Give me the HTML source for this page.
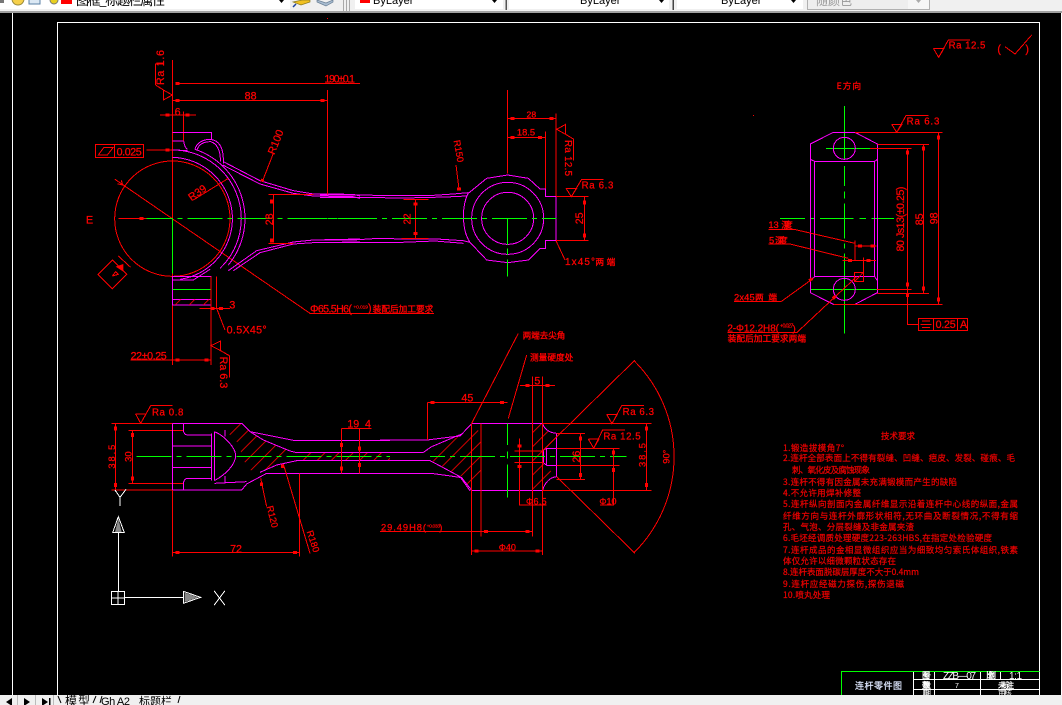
<!DOCTYPE html>
<html lang="zh">
<head>
<meta charset="utf-8">
<title>连杆零件图</title>
<style>
html,body{margin:0;padding:0;background:#000;width:1062px;height:705px;overflow:hidden}
svg{display:block;position:absolute;left:0;top:0}
text{font-family:"Liberation Sans","Noto Sans CJK SC",sans-serif;fill:#f00;stroke:none}
.r,.m,.g,.w,.t{fill:none;stroke-width:3;shape-rendering:crispEdges}
.r{stroke:#f00}.m{stroke:#f0f}.g{stroke:#0f0}.w{stroke:#fff}
.t{stroke:#f00;stroke-width:9}
.f{font-size:32px;stroke:#f00;stroke-width:.8px}
.c{font-size:26px;font-family:"Noto Sans CJK SC",sans-serif;stroke:#f00;stroke-width:1px}
.a{text-anchor:middle}
.k{font-size:8.5px;font-family:"Noto Sans CJK SC",sans-serif;fill:#e80000;stroke:#e80000;stroke-width:.25px}
.tb{font-size:11px;fill:#000}
.u1{stroke-width:1;stroke:#fff;fill:none;shape-rendering:crispEdges}
</style>
</head>
<body>
<svg width="1062" height="705" viewBox="0 0 1062 705" xmlns="http://www.w3.org/2000/svg">
<defs>
<pattern id="h" width="30" height="30" patternUnits="userSpaceOnUse" patternTransform="rotate(-45)"><path d="M0 1H30" stroke="#f00" stroke-width="3"/></pattern>
</defs>
<rect width="1062" height="705" fill="#000"/>

<!-- toolbar -->
<rect width="1062" height="13" fill="#f0f0f0"/>
<rect y="11" width="1062" height="2" fill="#a0a0a0"/>
<rect width="290" height="9" fill="#fff"/>
<path d="M0 0h4v3h-4z" fill="#777"/>
<circle cx="18" cy="-1" r="6" fill="#f6d04a" stroke="#9a8a3a"/>
<rect x="29" y="-4" width="11" height="8" fill="#dbe8f4" stroke="#5a7fa5"/>
<circle cx="54" cy="0" r="4" fill="#e8d020" stroke="#777"/>
<rect x="61" y="0" width="11" height="4" fill="#f00"/>
<text x="76" y="5" style="font-size:13px;fill:#000;font-family:'Noto Sans CJK SC',sans-serif" textLength="89">图框_标题栏属性</text>
<path d="M279 0h5l-2.500 3z" fill="#000"/>
<path d="M293 2l9-2h8v2l-9 3z" fill="#f0c020" stroke="#8a7a20" stroke-width=".7"/>
<path d="M293 7l3-3" stroke="#1a3fa0" stroke-width="1.500"/>
<path d="M317 0l9 3 7-3v2l-7 4-9-4z" fill="#a8bcd0" stroke="#6a7f95" stroke-width=".7"/>
<path d="M343.500 0v11M346.500 0v11M349.500 0v11" stroke="#aaa"/>
<rect x="355" width="148" height="9" fill="#fff"/>
<rect x="360" y="0" width="10" height="3" fill="#f00"/>
<text x="373" y="4" class="tb">ByLayer</text>
<path d="M492 0h5l-2.500 3z" fill="#000"/>
<rect x="509" width="160" height="9" fill="#fff"/>
<rect x="505.500" width="1.500" height="10" fill="#555"/>
<text x="580" y="4" class="tb">ByLayer</text>
<path d="M659 0h5l-2.500 3z" fill="#000"/>
<rect x="677" width="126" height="9" fill="#fff"/>
<rect x="672.500" width="1.500" height="10" fill="#444"/>
<text x="721" y="4" class="tb">ByLayer</text>
<path d="M791 0h5l-2.500 3z" fill="#000"/>
<rect x="808" width="100" height="9" fill="#eee"/>
<rect x="908" width="21" height="9" fill="#f6f6f6"/>
<path d="M807.500 0v9.500h122V0" fill="none" stroke="#b0b0b0"/>
<text x="816" y="5" style="font-size:12px;fill:#999;font-family:'Noto Sans CJK SC',sans-serif" textLength="36">随颜色</text>
<path d="M916 0h5l-2.500 3z" fill="#aaa"/>

<!-- frames -->
<path class="u1" d="M12.500 13V695M57.500 695V22.500H1039.500V695M1061.500 13V695"/>

<!-- title block -->
<path class="u1" d="M913.500 671V695M934.500 671V695M980.500 671V695M1000.500 671V679M914 679.500H1039M914 689.500H1039"/>
<path d="M841.500 695V671.500H1039.500" fill="none" stroke="#0f0" stroke-width="1" shape-rendering="crispEdges"/>
<text x="855" y="689" style="font-size:9px;fill:#dfe8ff;stroke:#dfe8ff;stroke-width:.2px;font-family:'Noto Sans CJK SC',sans-serif" textLength="47">连杆零件图</text>
<g>
<text x="922" y="678" style="font-size:8px;fill:#fff;stroke:#fff;stroke-width:.3px;font-family:'Noto Sans CJK SC',sans-serif" textLength="9">图号</text>
<text x="943" y="679" style="font-size:10px;fill:#fff" textLength="33">ZZB—07</text>
<text x="986" y="678" style="font-size:8px;fill:#fff;stroke:#fff;stroke-width:.3px;font-family:'Noto Sans CJK SC',sans-serif" textLength="10">比例</text>
<text x="1009" y="679" style="font-size:10px;fill:#fff" textLength="13">1:1</text>
<text x="922" y="688" style="font-size:8px;fill:#fff;stroke:#fff;stroke-width:.3px;font-family:'Noto Sans CJK SC',sans-serif" textLength="9">数量</text>
<text x="955" y="688" style="font-size:7px;fill:#fff">7</text>
<text x="998" y="688" style="font-size:8px;fill:#fff;stroke:#fff;stroke-width:.3px;font-family:'Noto Sans CJK SC',sans-serif" textLength="16">未标注</text>
<text x="922" y="696" style="font-size:8px;fill:#fff;font-family:'Noto Sans CJK SC',sans-serif" textLength="9">日期</text>
<text x="998" y="696" style="font-size:8px;fill:#fff;font-family:'Noto Sans CJK SC',sans-serif" textLength="14">审核</text>
</g>

<!-- top-left view, left part -->
<g transform="translate(80 60) scale(.33333)">
<path class="r" d="M277 0V915M290 71H840M277 121H742M742 105V403M240 165H348M311 155V245"/>
<path class="t" d="M286 71h12M286 121h12M722 121h12M257 165h12M317 165h12M256 270h12M179 476h12M574 418v12M574 535v12"/>
<path class="r" d="M227 75V12H250M250 90L277 105L250 120ZM227 75L250 90"/>
<text class="f" transform="translate(252 75) rotate(-90)" textLength="105">Ra 1.6</text>
<text class="f" x="733" y="68" textLength="92">190±0.1</text>
<text class="f" x="494" y="119">88</text>
<text class="f" x="284" y="166">6</text>
<circle class="r" cx="277" cy="476" r="173"/>
<path class="r" d="M105 358L690 760H840"/>
<path class="r" d="M128 375l-16-4M128 375l-4-14"/>
<path class="m" d="M277 217H395V240M277 243H311M311 243C313 255 316 265 322 268M277 270C290 270 305 271 322 272M277 292A184 184 0 0 1 300 658M277 270A206 206 0 0 1 420 625M345 268A219 219 0 0 1 445 615"/>
<path class="m" d="M345 268C350 245 375 238 390 238C415 240 432 260 430 310M352 268C358 250 375 245 392 245C410 250 422 270 421 305"/>
<path class="m" d="M430 305L540 362L640 392L700 402L820 403L840 408M428 315L540 372L640 400L700 408L820 410L840 415"/>
<path class="m" d="M445 632L530 572L640 546L700 540L840 537M460 632L540 578L640 552L700 548L840 546"/>
<path class="m" d="M277 650H393V735H277ZM277 660H340L390 628M277 718H393"/>
<rect x="277" y="718" width="116" height="17" fill="url(#h)"/>
<path class="g" d="M277 688H393M277 476V640"/>
<path class="g" d="M200 476H840" style="stroke-dasharray:105 15 15 15;stroke-dashoffset:28"/>
<path class="r" d="M393 650V915M410 650V745M358 745H450M410 745L435 810"/>
<path class="t" d="M392 745h12M417 745h12M286 900h12M374 900h12"/>
<text class="f" x="448" y="745">3</text>
<text class="f" x="440" y="820" textLength="120">0.5X45°</text>
<path class="r" d="M152 900H393M393 857L422 843V872ZM422 872L448 887V952"/>
<text class="f" x="152" y="898" textLength="108">22±0.25</text>
<text class="f" transform="translate(420 890) rotate(90)" textLength="95">Ra 6.3</text>
<text class="f" x="18" y="490">E</text>
<path class="r" d="M115 476H200"/>
<path class="r" d="M97 600L140 643L97 686L54 643ZM115 588L152 622M97 648l18-5-8-8-10 13"/>
<path d="M107 620L130 612V635Z" fill="#f00"/>
<path class="r" d="M46 254H190V292H46ZM104 254V292M55 285L72 262H100L82 285ZM200 270H277"/>
<text class="f" x="110" y="286" textLength="75">0.025</text>
<path class="r" d="M340 420L445 355M580 280L548 362"/>
<path class="r" d="M565 403H700M565 550H640M580 403V548"/>
<text class="f a" transform="translate(358 407) rotate(-35)">R39</text>
<text class="f a" transform="translate(597 250) rotate(-68)">R100</text>
<text class="f a" transform="translate(579 478) rotate(-90)">28</text>
<path class="t" d="M548 357l-2 8"/>
<text class="f" x="690" y="757" textLength="126">Φ65.5H6(</text>
</g>

<!-- top-left view, right part -->
<g transform="translate(320 90) scale(.33333)">
<path class="r" d="M22 0V313M563 0V250M708 70V320M676 125V297M563 86H708M563 142H676"/>
<path class="t" d="M571 86h12M689 86h12M571 142h12M654 142h12M280 342h12M280 430h12M411 297h12"/>
<path class="m" d="M0 315H100L250 317L340 316L400 312L445 308M0 322H100L250 324L340 322L400 320L440 318M0 450H100L175 445L250 447L350 447L430 452M0 458H100L245 457L345 453L430 460"/>
<path class="r" d="M250 328H325M245 445H325M286 328V445"/>
<path class="m" d="M440 318L445 310L500 265L563 255L625 265L660 297H676V320H708V452H676V475H660L625 510L563 518L500 510L450 457L430 452M444 310C425 350 425 420 450 457"/>
<circle class="m" cx="563" cy="385" r="108"/>
<circle class="m" cx="563" cy="385" r="78"/>
<path class="g" d="M8 385H710" style="stroke-dasharray:105 15 15 15;stroke-dashoffset:92"/>
<path class="g" d="M563 385V465M563 475V495M563 508V560"/>
<text class="f a" x="634" y="83" style="font-size:26px">28</text>
<text class="f a" x="618" y="137" style="font-size:28px">18.5</text>
<path class="r" d="M738 295H770L754 320L738 295M754 320L785 268H850M708 320H805M708 452H805M793 320V452"/>
<path class="t" d="M793 331v12M793 431v12"/>
<text class="f" x="785" y="296" style="font-size:29px" textLength="95">Ra 6.3</text>
<text class="f a" transform="translate(789 385) rotate(-90)">25</text>
<path class="r" d="M710 118L737 103V133ZM737 133L760 147V212"/>
<text class="f" transform="translate(735 150) rotate(90)" style="font-size:29px" textLength="108">Ra 12.5</text>
<path class="r" d="M708 452L735 510"/>
<text class="f" x="735" y="525" textLength="90" style="font-size:30px">1x45°</text>
<text class="c" x="826" y="525" textLength="60">两端</text>
<text class="f a" transform="translate(272 387) rotate(-90)" style="font-size:30px">22</text>
<text class="f" transform="translate(401 152) rotate(80)" style="font-size:28px">R150</text>
<path class="r" d="M408 225L417 297"/>
<path class="r" d="M0 670H342"/>
<text x="100" y="655" style="font-size:15px;stroke:#f00;stroke-width:.6px" textLength="44">+0.019</text>
<text class="f" x="144" y="664">)</text>
<text class="c" x="158" y="666" textLength="182">装配后加工要求</text>
</g>

<!-- right view -->
<g transform="translate(720 30) scale(.33333)">
<path class="r" d="M640 55H672L656 82L640 55M656 82L685 30H750"/>
<text class="f" x="686" y="56" style="font-size:29px" textLength="110">Ra 12.5</text>
<text class="f" x="832" y="67">(</text>
<path class="r" d="M855 50L885 72L935 15"/>
<text class="f" x="916" y="67">)</text>
<text class="c" x="350" y="177" textLength="73">E方向</text>
<path class="g" d="M373 228V390M373 408V468M373 485V505M373 520V625M373 640V655M373 670V910M180 565H255M270 565H285M300 565H400M418 565H438M455 565H522M318 355H450M270 778H470"/>
<path class="m" d="M340 307H405L472 342V788L405 823H340L271 788V342ZM284 394H464V740H284ZM271 342V388L284 394M472 342V388L464 394M271 752L284 740M472 752L464 740"/>
<circle class="m" cx="373" cy="355" r="33"/>
<circle class="m" cx="373" cy="778" r="33"/>
<path class="r" d="M405 307H668M472 343H627M340 823H668M472 790H627M450 355H575M470 778H575"/>
<path class="r" d="M656 307V823M610 343V790M562 355V883H595"/>
<path class="t" d="M656 316v12M656 802v12M610 349v12M610 769v12M562 362v12M562 757v12M562 789v12"/>
<text class="f a" transform="translate(653 565) rotate(-90)">98</text>
<text class="f a" transform="translate(609 568) rotate(-90)">85</text>
<text class="f a" transform="translate(552 567) rotate(-90)" textLength="195">80 Js13(±0.25)</text>
<path class="r" d="M595 865H743V901H595ZM640 865V901M713 865V901M606 873H630M602 883H634M606 892H630"/>
<text class="f" x="647" y="894" textLength="60">0.25</text>
<text class="f" x="720" y="894">A</text>
<path class="r" d="M515 283H546L530 307L515 283M530 307L558 257H625"/>
<text class="f" x="560" y="284" style="font-size:29px" textLength="98">Ra 6.3</text>
<path class="r" d="M145 598H222L405 640M145 642H210L385 685M405 632V690M405 648H470M368 692H468M430 682V730M403 727H430V755H403ZM403 755L430 727"/>
<path class="t" d="M414 648h12M452 648h12M384 692h12M439 692h12"/>
<text class="f" x="145" y="594" style="font-size:28px">13</text>
<text class="c" x="184" y="594" textLength="34">深度</text>
<text class="f" x="147" y="640" style="font-size:28px">5</text>
<text class="c" x="165" y="640" textLength="38">深度</text>
<path class="r" d="M42 815H183L280 745M22 908H230L410 740"/>
<path class="t" d="M268 752l8-6M338 806l8-7"/>
<text class="f" x="42" y="812" textLength="62" style="font-size:28px">2x45</text>
<text class="c" x="105" y="812" textLength="66">两端</text>
<text class="f" x="22" y="905" textLength="155" style="font-size:30px">2-Φ12.2H8(</text>
<text x="180" y="893" style="font-size:16px;stroke:#f00;stroke-width:.6px" textLength="40">+0.027</text>
<text class="f" x="218" y="905" style="font-size:28px">)</text>
<text class="c" x="23" y="934" textLength="235">装配后加工要求两端</text>
</g>

<!-- bottom view left -->
<g transform="translate(90 390) scale(.33333)">
<path d="M415 100H455L480 125L530 155L600 183L615 190L590 205L560 225L510 247L480 240L460 210L445 160L410 125Z" fill="url(#h)"/>
<rect x="620" y="188" width="280" height="24" fill="url(#h)"/>
<path class="r" d="M137 72H168L152 100L137 72M152 100L182 47H248"/>
<text class="f" x="186" y="76" style="font-size:29px" textLength="94">Ra 0.8</text>
<path class="r" d="M65 100H248M115 121H280M65 300H248M115 280H280M76 100V300M127 121V280"/>
<path class="t" d="M76 109v12M76 279v12M127 129v12M127 259v12"/>
<text class="f a" transform="translate(75 200) rotate(-90)" textLength="72" style="font-size:28px">38.5</text>
<text class="f a" transform="translate(125 200) rotate(-90)" style="font-size:28px">30</text>
<path class="m" d="M248 100H455L480 125L520 150L600 183L620 188H900M248 300H455L470 282L530 250L610 250H900M248 100V300"/>
<path class="m" d="M280 100V122C282 130 285 135 295 135H365M280 300V280C282 270 285 265 295 265H365M248 168H365M248 233H365M365 130V272M373 125V272M373 125C400 135 435 170 437 195C437 225 405 255 373 272M405 120V140M405 258V280M373 280L470 275M480 125L615 152H900M510 247L560 225L620 212H900"/>
<path class="g" d="M140 200H900" style="stroke-dasharray:105 15 15 15"/>
<path class="r" d="M248 300V500M248 488H628M628 250V500"/>
<path class="t" d="M256 488h12M609 488h12M755 159v12M755 229v12M808 169v12M808 219v12M514 278v10M578 224v10"/>
<text class="f a" x="438" y="487">72</text>
<path class="r" d="M512 265L530 350M580 222L660 490M755 115V250M808 115V250M755 115H845"/>
<text class="f" x="772" y="113">19</text>
<text class="f" x="825" y="113">4</text>
<text class="f" transform="translate(530 350) rotate(76)" style="font-size:28px">R120</text>
<text class="f" transform="translate(650 425) rotate(72)" style="font-size:28px">R180</text>
<path d="M85 385L75 426H95Z" fill="#888"/>
<path d="M284 608L325 622L284 636Z" fill="#888"/>
<path class="w" d="M75 300L90 322L108 298M90 322V348M85 380L68 428H103ZM85 428V605M64 604H104V644H64ZM84 604V644M64 624H104M104 622H280M280 604L332 622L280 640ZM372 602L405 646M405 602L372 646"/>
</g>

<!-- bottom view right -->
<g transform="translate(380 330) scale(.33333)">
<path d="M275 281L303 310V455L275 481L245 440L150 390V365L245 315Z" fill="url(#h)"/>
<path d="M457 281H488L500 300L530 310L490 360V400L530 440L500 452L488 481H457Z" fill="url(#h)"/>
<path class="m" d="M0 330H142L205 322L240 318L275 281M0 367H130L155 350L245 312M0 392H150L175 405L240 440L270 482M0 431H160L205 437L245 443L275 481M275 281H488M275 481H488M488 281C492 295 505 308 530 310V440C505 442 492 465 488 481M490 360L500 355H530M490 398L500 406H530M500 355V406M490 360V398"/>
<path class="r" d="M488 281H815M488 481H815M303 281V620M457 140V620M488 140V675M275 281V675M403 363H490M403 398H490M418 325V525H500"/>
<path class="t" d="M412 348h12M412 410h12M312 604h12M436 604h12M284 663h12M467 663h12M152 217h12M360 217h12M436 166h12M497 166h12M800 289v12M800 459v12M602 319v12M602 429v12M700 362v12M700 414v12"/>
<path class="g" d="M382 281V345M382 365V385M382 403V503"/>
<path class="g" d="M150 380H740" style="stroke-dasharray:105 15 15 15;stroke-dashoffset:60"/>
<path class="r" d="M143 217H382M143 217V330M415 10L275 280M440 75L385 265M420 166H525"/>
<text class="f a" x="262" y="215">45</text>
<text class="f" x="463" y="164">5</text>
<text class="c" x="428" y="26" textLength="128">两端去尖角</text>
<text class="c" x="450" y="92" textLength="130">测量硬度处</text>
<text class="f" x="438" y="524" textLength="62" style="font-size:27px">Φ6.5</text>
<path class="r" d="M490 360L765 90M530 440L765 670M762 92A405 405 0 0 1 762 668"/>
<text class="f a" transform="translate(868 380) rotate(-90)" style="font-size:28px">90°</text>
<path class="r" d="M800 281V481M530 310H615M530 448H615M602 310V448M530 355H718M530 406H718M700 355V525H660"/>
<text class="f a" transform="translate(797 375) rotate(-90)" textLength="72" style="font-size:28px">38.5</text>
<text class="f a" transform="translate(600 380) rotate(-90)">26</text>
<text class="f" x="658" y="524" style="font-size:27px">Φ10</text>
<path class="r" d="M680 253H712L696 281L680 253M696 281L725 227H792M625 327H657L641 355L625 327M641 355L668 300H735"/>
<text class="f" x="728" y="255" style="font-size:29px" textLength="94">Ra 6.3</text>
<text class="f" x="670" y="329" style="font-size:29px" textLength="112">Ra 12.5</text>
<path class="r" d="M0 604H457M275 663H488"/>
<text class="f" x="3" y="601" textLength="135" style="font-size:28px">29.49H8(</text>
<text x="140" y="592" style="font-size:15px;stroke:#f00;stroke-width:.6px" textLength="40">+0.033</text>
<text class="f" x="178" y="601" style="font-size:27px">)</text>
<text class="f a" x="382" y="662" style="font-size:27px">Φ40</text>
</g>

<!-- technical requirements -->
<text class="k" x="881" y="439" textLength="34">技术要求</text>
<text class="k" x="783" y="451" textLength="61">1.锻造拔模角7°</text>
<text class="k" x="783" y="461" textLength="232">2.连杆全部表面上不得有裂缝、凹缝、疤皮、发裂、碰痕、毛</text>
<text class="k" x="792" y="473" textLength="78">刺、氧化皮及腐蚀现象</text>
<text class="k" x="783" y="485" textLength="174">3.连杆不得有因金属未充满锻模而产生的缺陷</text>
<text class="k" x="783" y="496" textLength="78">4.不允许用焊补修整</text>
<text class="k" x="783" y="507" textLength="235">5.连杆纵向剖面内金属纤维显示沿着连杆中心线的纵面,金属</text>
<text class="k" x="783" y="519" textLength="235">纤维方向与连杆外廓形状相符,无环曲及断裂情况,不得有缩</text>
<text class="k" x="783" y="530" textLength="131">孔、气泡、分层裂缝及非金属夹渣</text>
<text class="k" x="783" y="541" textLength="209">6.毛坯经调质处理硬度223-263HBS,在指定处检验硬度</text>
<text class="k" x="783" y="553" textLength="235">7.连杆成品的金相显微组织应当为细致均匀索氏体组织,铁素</text>
<text class="k" x="783" y="564" textLength="113">体仅允许以细微颗粒状态存在</text>
<text class="k" x="783" y="575" textLength="136">8.连杆表面脱碳层厚度不大于0.4mm</text>
<text class="k" x="783" y="587" textLength="121">9.连杆应经磁力探伤,探伤退磁</text>
<text class="k" x="783" y="598" textLength="47">10.喷丸处理</text>

<rect x="327" y="18" width="1" height="1" fill="#f00"/>
<rect x="753" y="115" width="1" height="1" fill="#f00"/>

<!-- bottom bar -->
<rect y="695" width="1062" height="10" fill="#f0f0f0"/>
<path d="M17.500 695V705M35.500 695V705M53.500 695V705" stroke="#bbb"/>
<path d="M12 698L6 702L12 706Z" fill="#000"/>
<path d="M24 698L30 702L24 706Z" fill="#000"/>
<path d="M42 698L48 702L42 706ZM49 698h1.500v8H49z" fill="#000"/>
<path d="M58 696L61 703M96 696L93 703M100 703L102 696M178 703L180 696" stroke="#000" fill="none"/>
<text x="65" y="705" style="font-size:12px;fill:#000;font-family:'Noto Sans CJK SC',sans-serif" textLength="25">模型</text>
<text x="101" y="705" style="font-size:11px;fill:#000" textLength="29">Gh A2</text>
<text x="139" y="705" style="font-size:11px;fill:#000;font-family:'Noto Sans CJK SC',sans-serif" textLength="33">标题栏</text>
</svg>
</body>
</html>
